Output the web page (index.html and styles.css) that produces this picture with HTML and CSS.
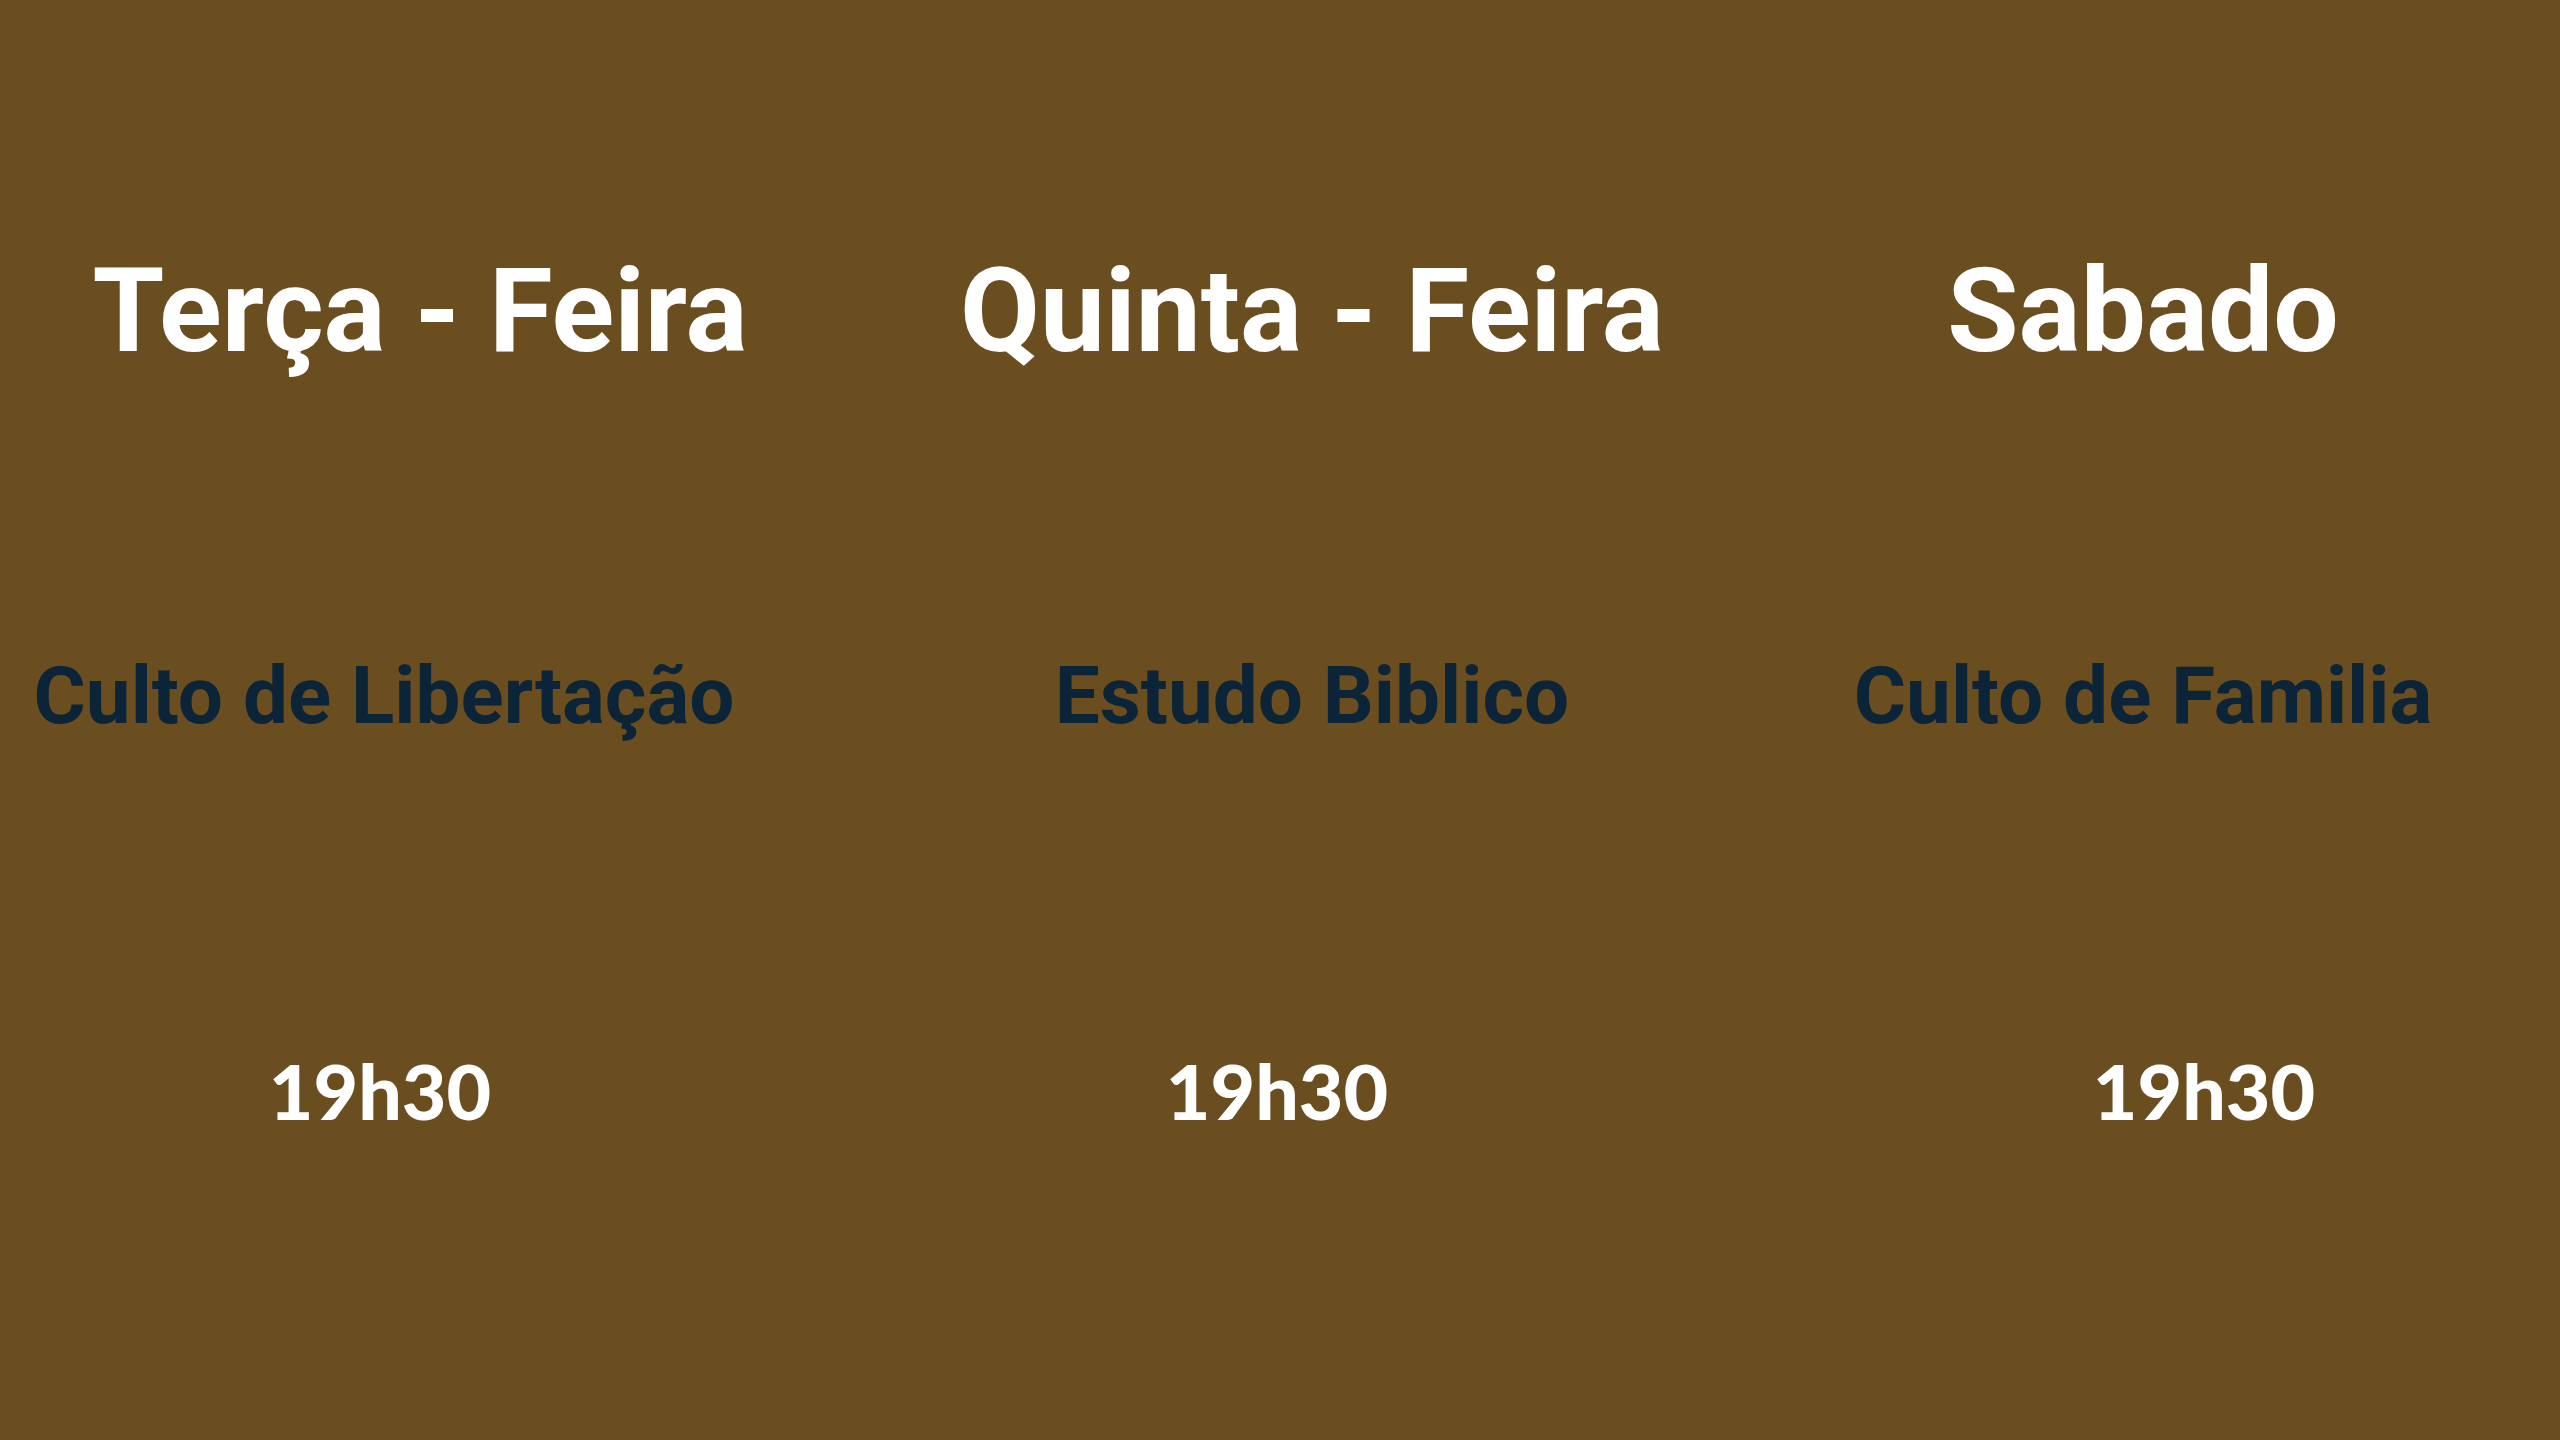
FILE: index.html
```html
<!DOCTYPE html>
<html lang="pt">
<head>
<meta charset="utf-8">
<title>Cultos</title>
<link rel="stylesheet" href="styles.css">
</head>
<body>
<main class="board">
  <section class="col col-1">
    <h2 class="day">Terça - Feira</h2>
    <p class="service shift-sub-1">Culto de Libertação</p>
    <p class="time shift-time-1">19h30</p>
  </section>
  <section class="col col-2">
    <h2 class="day">Quinta - Feira</h2>
    <p class="service">Estudo Biblico</p>
    <p class="time shift-time-2">19h30</p>
  </section>
  <section class="col col-3">
    <h2 class="day">Sabado</h2>
    <p class="service">Culto de Familia</p>
    <p class="time shift-time-3">19h30</p>
  </section>
</main>
</body>
</html>
```

FILE: styles.css
```css
html, body {
  margin: 0;
  padding: 0;
  background: #6a4e20;
}

.board {
  width: 2560px;
  height: 1440px;
  background: #6a4e20;
  display: grid;
  grid-template-columns: 840px 944px 718px 58px;
  font-family: "Roboto", "Open Sans", sans-serif;
}

.col {
  display: flex;
  flex-direction: column;
  align-items: center;
  padding-top: 253px;
}

.day {
  margin: 0;
  font-size: 116px;
  line-height: 1;
  font-weight: 700;
  color: #ffffff;
  white-space: nowrap;
}

.service {
  margin: 287px 0 0;
  font-size: 80px;
  line-height: 1;
  font-weight: 700;
  color: #0c2438;
  white-space: nowrap;
}

.time {
  margin: 316px 0 0;
  font-family: "Lato", "Open Sans", sans-serif;
  font-size: 77px;
  line-height: 1;
  font-weight: 900;
  color: #ffffff;
}

.shift-sub-1 { margin-right: 72px; }
.shift-time-1 { margin-right: 80px; }
.shift-time-2 { margin-right: 70px; }
.shift-time-3 { margin-left: 122px; }
```
